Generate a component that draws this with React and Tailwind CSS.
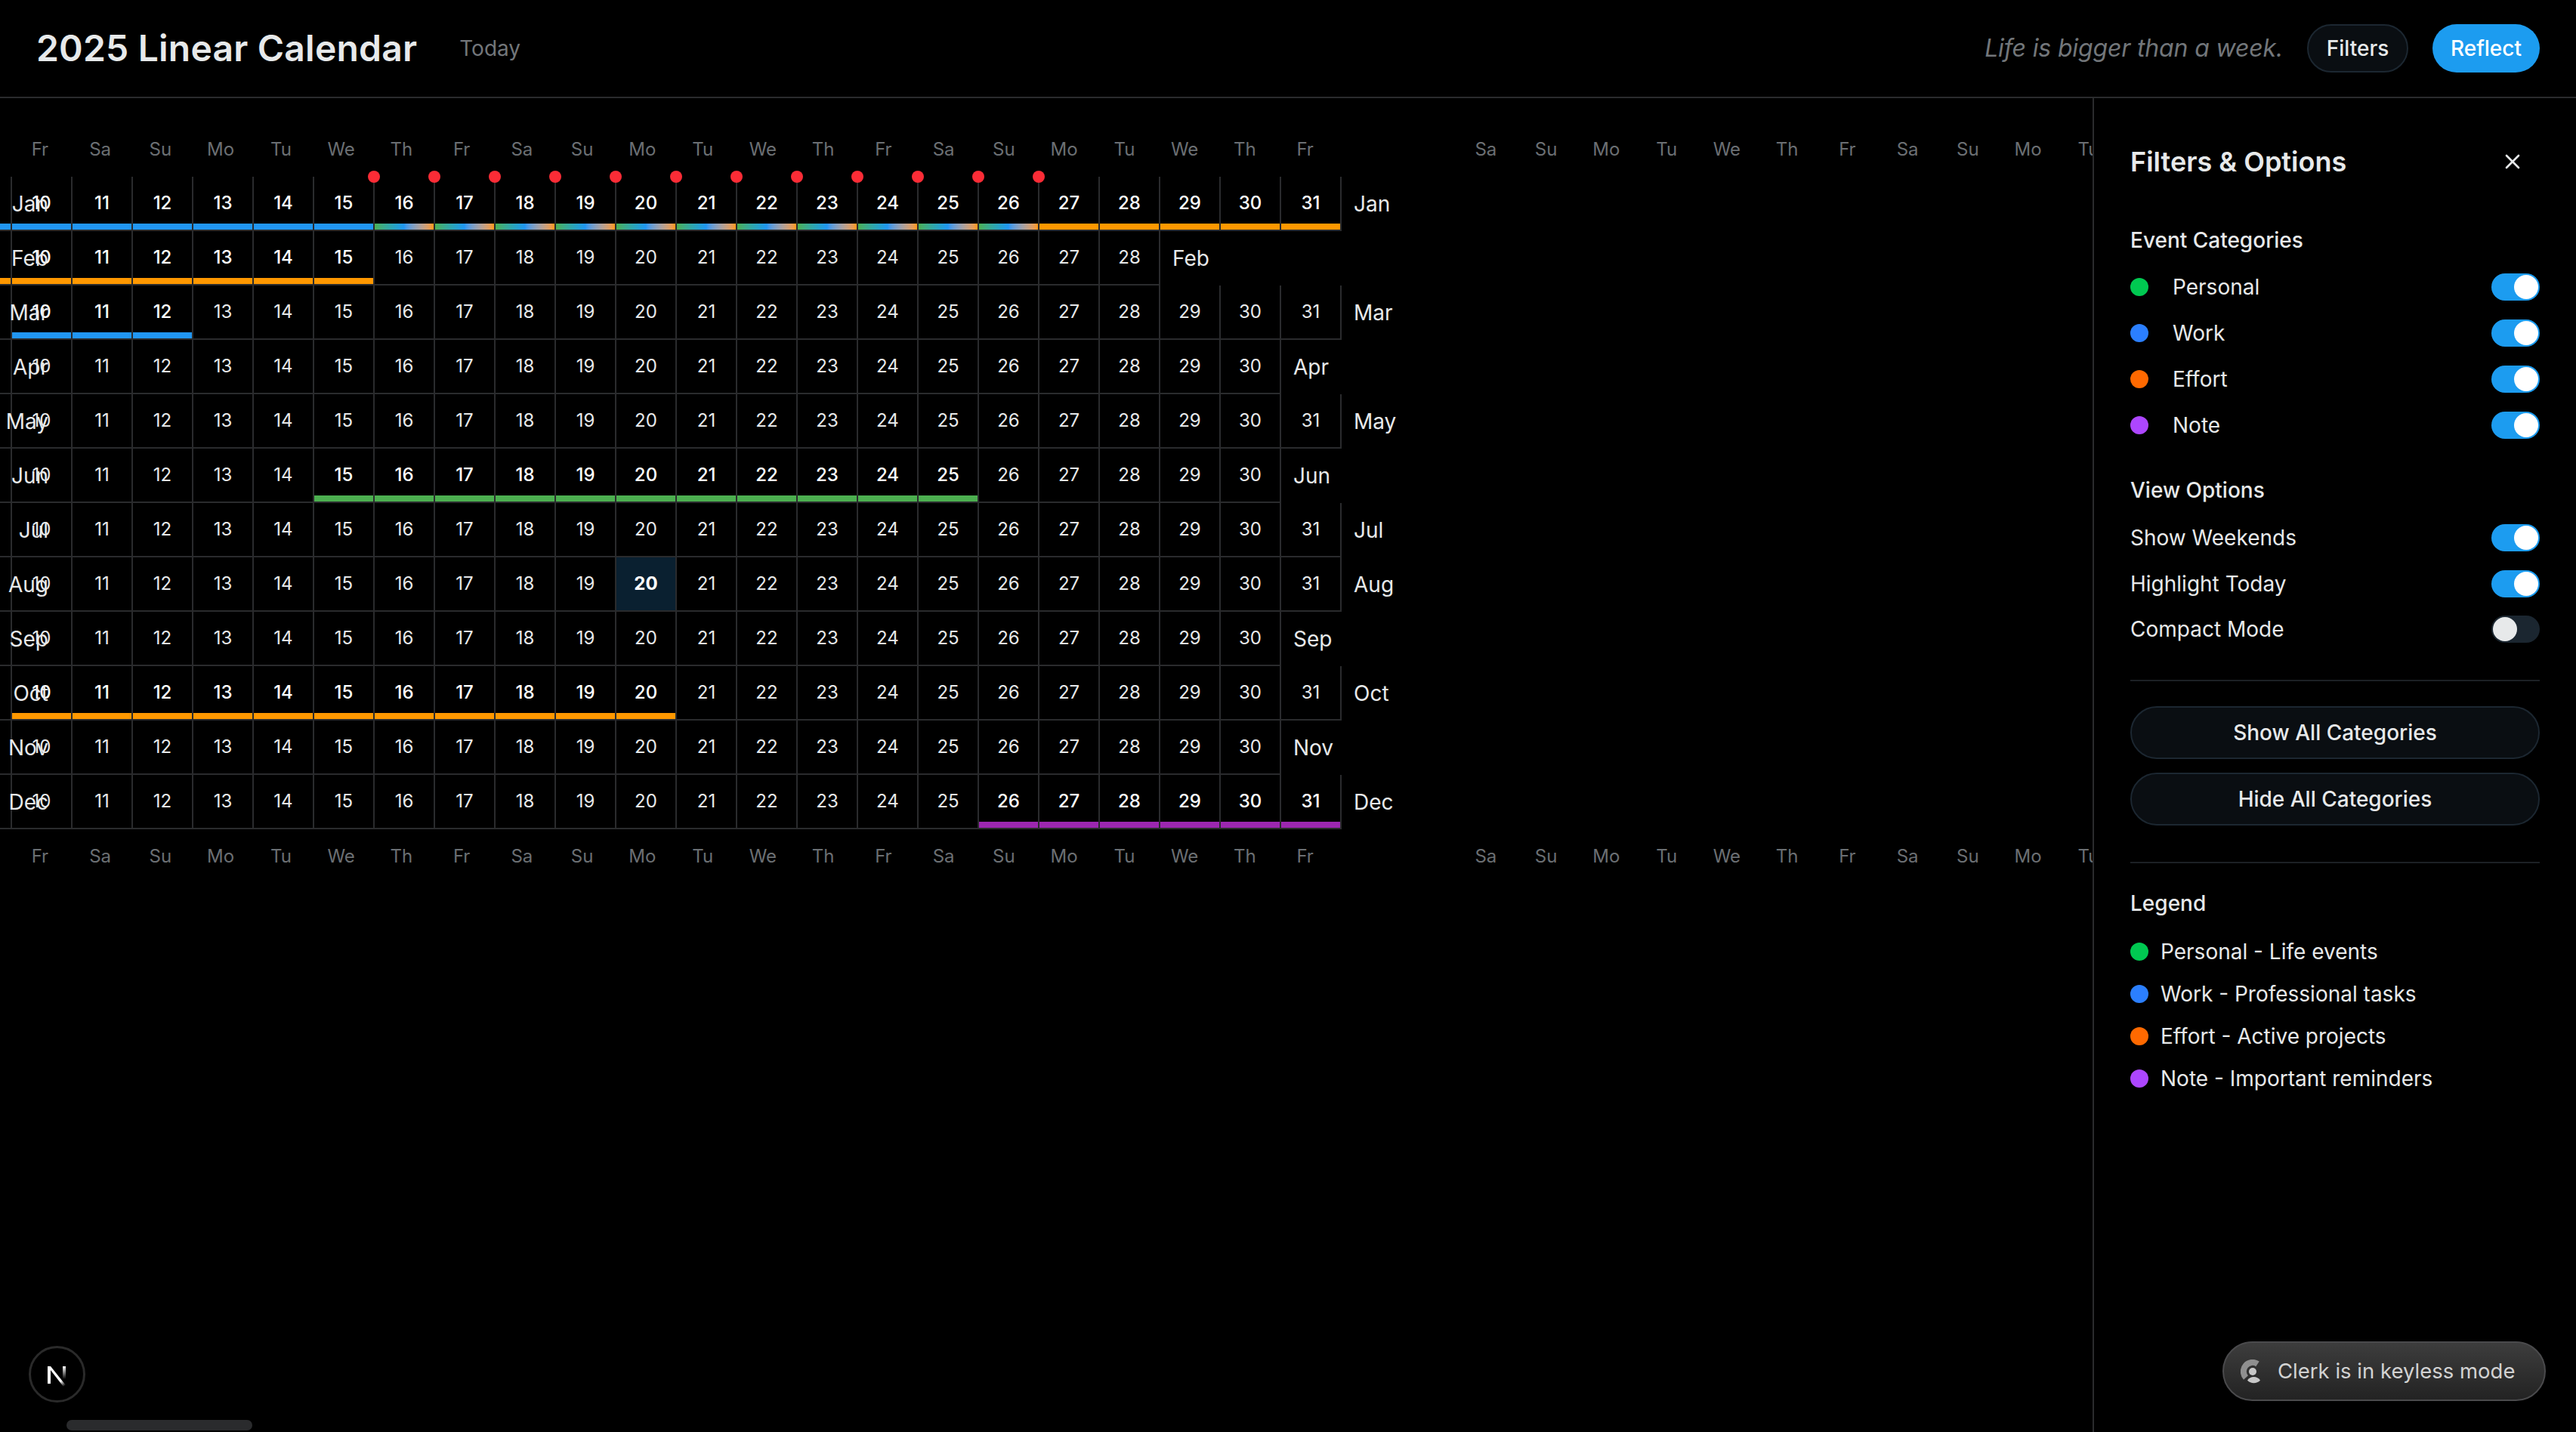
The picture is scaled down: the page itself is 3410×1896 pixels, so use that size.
import { X } from "lucide-react";

const MONTHS = [
  ["Jan", 31],
  ["Feb", 28],
  ["Mar", 31],
  ["Apr", 30],
  ["May", 31],
  ["Jun", 30],
  ["Jul", 31],
  ["Aug", 31],
  ["Sep", 30],
  ["Oct", 31],
  ["Nov", 30],
  ["Dec", 31],
];

const WEEK = ["Fr", "Sa", "Su", "Mo", "Tu", "We", "Th"];
const FIRST_DAY = 10;

// bars per month: [from, to, colour class]
const BLUE = "bg-[#2196f3]";
const ORANGE = "bg-[#ff9800]";
const GREEN = "bg-[#4caf50]";
const PURPLE = "bg-[#9c27b0]";
const MIXED = "bg-linear-to-r from-[#4caf50] via-[#2196f3] to-[#ff9800]";

const EVENTS = {
  Jan: [
    [9, 15, BLUE],
    [16, 26, MIXED],
    [27, 31, ORANGE],
  ],
  Feb: [[9, 15, ORANGE]],
  Mar: [[10, 12, BLUE]],
  Jun: [[15, 25, GREEN]],
  Oct: [[10, 20, ORANGE]],
  Dec: [[26, 31, PURPLE]],
};

function barFor(month, day) {
  const hit = (EVENTS[month] || []).find(([a, b]) => day >= a && day <= b);
  return hit ? hit[2] : null;
}

function Cell({ month, day, last }) {
  const bar = barFor(month, day);
  const today = month === "Aug" && day === 20;
  const pin = month === "Jan" && day >= 16 && day <= 27;
  return (
    <div
      className={`relative flex h-[72px] shrink-0 items-center justify-center border-b-2 border-l-2 border-[#2a2b2d] text-[24px] ${
        last ? "w-[82px] border-r-2" : "w-[80px]"
      } ${today ? "bg-[#0a2030] font-bold text-white" : bar ? "font-medium text-white" : "text-[#e7e9ea]"}`}
    >
      {day}
      {bar && <div className={`absolute inset-x-0 bottom-0 h-2 ${bar}`} />}
      {pin && <div className="absolute -left-[9px] -top-2 z-10 size-4 rounded-full bg-red-500" />}
    </div>
  );
}

function MonthRow({ name, days }) {
  const stub = barFor(name, 9);
  const cells = [];
  for (let d = FIRST_DAY; d <= days; d++) cells.push(d);
  return (
    <div className="flex h-[72px]">
      <div className="relative h-[72px] w-[14px] shrink-0 border-b-2 border-[#2a2b2d]">
        {stub && <div className={`absolute inset-x-0 bottom-0 h-2 ${stub}`} />}
      </div>
      {cells.map((d) => (
        <Cell key={d} month={name} day={d} last={d === days} />
      ))}
      <div className="flex items-center pl-4 text-[28px] text-[#e7e9ea]">{name}</div>
    </div>
  );
}

function WeekHeader({ className = "" }) {
  const first = [];
  for (let i = 0; i < 22; i++) first.push(WEEK[i % 7]);
  const rest = [];
  for (let i = 1; i < 13; i++) rest.push(WEEK[i % 7]);
  return (
    <div className={`flex pl-[13px] text-[24px] leading-8 text-[#6b6f73] ${className}`}>
      {first.map((d, i) => (
        <div key={i} className="w-[79.76px] shrink-0 text-center">
          {d}
        </div>
      ))}
      <div className="w-[159.5px] shrink-0" />
      {rest.map((d, i) => (
        <div key={i} className="w-[79.76px] shrink-0 text-center">
          {d}
        </div>
      ))}
    </div>
  );
}

function Toggle({ on = true }) {
  return (
    <div
      className={`flex h-9 w-16 shrink-0 items-center rounded-full border-2 border-transparent ${
        on ? "justify-end bg-[#1c9cf0]" : "justify-start bg-[#1b2630]"
      }`}
    >
      <div className={`size-8 rounded-full ${on ? "bg-white" : "bg-[#e7e9ea]"}`} />
    </div>
  );
}

function OutlineBtn({ children, className = "" }) {
  return (
    <button
      className={`rounded-full border-2 border-[#1c2731] bg-[#0a0e12] text-[28px] font-medium text-[#e7e9ea] ${className}`}
    >
      {children}
    </button>
  );
}

function ClerkIcon() {
  return (
    <svg width="32" height="32" viewBox="0 0 32 32" fill="none">
      <path d="M22.5 5.9A12 12 0 0 0 7 24" stroke="#8f8f8f" strokeWidth="8" />
      <circle cx="16" cy="16" r="5" fill="#c8c8c8" />
      <path d="M9 27.5C11 24.5 14 23 17.5 23C21 23 24 24.5 26 27.5C21.5 32.5 13.5 32.5 9 27.5Z" fill="#c8c8c8" />
    </svg>
  );
}

function NextLogo() {
  return (
    <svg width="32" height="32" viewBox="0 0 32 32" fill="none">
      <defs>
        <linearGradient id="nextDiag" x1="10" y1="8" x2="27" y2="30" gradientUnits="userSpaceOnUse">
          <stop stopColor="#fff" />
          <stop offset="0.7" stopColor="#fff" />
          <stop offset="1" stopColor="#fff" stopOpacity="0" />
        </linearGradient>
        <linearGradient id="nextBar" x1="25" y1="5" x2="25" y2="22" gradientUnits="userSpaceOnUse">
          <stop stopColor="#fff" />
          <stop offset="1" stopColor="#fff" stopOpacity="0" />
        </linearGradient>
      </defs>
      <path d="M3 5H7V28H3Z" fill="#fff" />
      <path d="M3 5H7L27 30L24 32Z" fill="url(#nextDiag)" />
      <path d="M23 5H27V22H23Z" fill="url(#nextBar)" />
    </svg>
  );
}

export default function App() {
  const categories = [
    ["Personal", "bg-green-500"],
    ["Work", "bg-blue-500"],
    ["Effort", "bg-orange-500"],
    ["Note", "bg-purple-500"],
  ];
  const legend = [
    ["Personal - Life events", "bg-green-500"],
    ["Work - Professional tasks", "bg-blue-500"],
    ["Effort - Active projects", "bg-orange-500"],
    ["Note - Important reminders", "bg-purple-500"],
  ];

  return (
    <div className="relative flex h-screen w-full flex-col overflow-hidden bg-black font-[Inter,sans-serif] text-[#e7e9ea]">
      {/* Top bar */}
      <header className="flex h-[130px] shrink-0 items-center border-b-2 border-[#2a2b2d] px-12">
        <h1 className="text-[48px] leading-[64px] font-semibold tracking-[0.2px]">2025 Linear Calendar</h1>
        <span className="ml-14 text-[28px] text-[#72767a]">Today</span>
        <span className="ml-auto text-[32px] tracking-[-0.15px] text-[#72767a] italic">Life is bigger than a week.</span>
        <OutlineBtn className="ml-8 h-16 w-[134px]">Filters</OutlineBtn>
        <button className="ml-8 h-16 w-[142px] rounded-full bg-[#1c9cf0] text-[28px] font-medium text-white">
          Reflect
        </button>
      </header>

      <div className="flex min-h-0 flex-1">
        {/* Calendar */}
        <main className="relative min-w-0 flex-1 overflow-hidden pt-[52px]">
          <WeekHeader className="mb-5" />
          <div className="relative">
            {MONTHS.map(([name, days]) => (
              <MonthRow key={name} name={name} days={days} />
            ))}
            <div className="absolute left-0 top-0 z-20 w-[64px]">
              {MONTHS.map(([name]) => (
                <div key={name} className="flex h-[72px] items-center justify-end text-[28px] text-[#e7e9ea]">
                  {name}
                </div>
              ))}
            </div>
          </div>
          <WeekHeader className="mt-5" />
        </main>

        {/* Filters panel */}
        <aside className="w-[640px] shrink-0 border-l-2 border-[#2a2b2d] px-12 pt-12">
          <div className="flex h-[72px] items-center justify-between">
            <h2 className="text-[36px] font-semibold">Filters &amp; Options</h2>
            <X className="mr-5 size-8" strokeWidth={2} />
          </div>

          <h3 className="mt-12 text-[28px] leading-10 font-medium">Event Categories</h3>
          <div className="mt-[22px] flex flex-col gap-[21px]">
            {categories.map(([name, dot]) => (
              <div key={name} className="flex h-10 items-center text-[28px]">
                <span className={`size-6 rounded-full ${dot}`} />
                <span className="ml-8">{name}</span>
                <span className="ml-auto">
                  <Toggle />
                </span>
              </div>
            ))}
          </div>

          <h3 className="mt-[46px] text-[28px] leading-10 font-medium">View Options</h3>
          <div className="mt-[23px] flex flex-col gap-[20.5px] text-[28px]">
            <div className="flex h-10 items-center justify-between">
              Show Weekends
              <Toggle />
            </div>
            <div className="flex h-10 items-center justify-between">
              Highlight Today
              <Toggle />
            </div>
            <div className="flex h-10 items-center justify-between">
              Compact Mode
              <Toggle on={false} />
            </div>
          </div>

          <div className="mt-[47px] h-0.5 bg-[#1c2024]" />

          <div className="mt-[33px] flex flex-col gap-[18px]">
            <OutlineBtn className="h-[70px] w-full">Show All Categories</OutlineBtn>
            <OutlineBtn className="h-[70px] w-full">Hide All Categories</OutlineBtn>
          </div>

          <div className="mt-12 h-0.5 bg-[#1c2024]" />

          <h3 className="mt-[33px] text-[28px] leading-10 font-medium">Legend</h3>
          <div className="mt-6 flex flex-col gap-4">
            {legend.map(([name, dot]) => (
              <div key={name} className="flex h-10 items-center gap-4 text-[28px]">
                <span className={`size-6 rounded-full ${dot}`} />
                {name}
              </div>
            ))}
          </div>
        </aside>
      </div>

      {/* Dev overlays */}
      <div className="absolute bottom-[39px] left-[38px] flex size-[75px] items-center justify-center rounded-full border-[3px] border-[#2a2a2a] bg-black">
        <NextLogo />
      </div>
      <div className="absolute bottom-[2px] left-[88px] h-[14px] w-[246px] rounded-full bg-[#2a2b2d]" />
      <div className="absolute bottom-[41px] right-10 flex h-[79px] w-[428px] items-center gap-[17px] rounded-full border-2 border-[#4a4a4c] bg-linear-to-b from-[#3d3d3d] to-[#232323] pl-[22px] text-[27.5px] text-[#d2d2d2]">
        <ClerkIcon />
        <span>Clerk is in keyless mode</span>
      </div>
    </div>
  );
}
